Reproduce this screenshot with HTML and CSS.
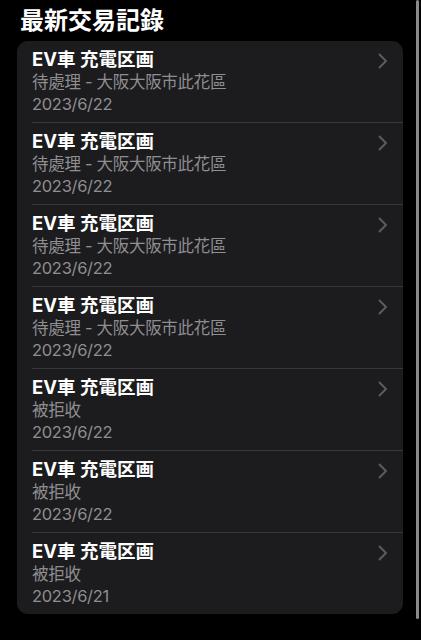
FILE: index.html
```html
<!DOCTYPE html>
<html lang="ja">
<head>
    <meta charset="UTF-8">
    <title>最新交易記錄</title>
    <link rel="stylesheet" href="styles.css">
</head>
<body>
<div class="screen">
    <h2 class="section-title">最新交易記錄</h2>

    <div class="card">
        <div class="row">
            <div class="row-text">
                <div class="row-title">EV車 充電区画</div>
                <div class="row-sub">待處理 - 大阪大阪市此花區</div>
                <div class="row-sub">2023/6/22</div>
            </div>
            <svg class="chevron" width="10" height="16" viewBox="0 0 10 16"><path d="M1.5 1.5 L8 8 L1.5 14.5"/></svg>
        </div>
        <div class="row">
            <div class="row-text">
                <div class="row-title">EV車 充電区画</div>
                <div class="row-sub">待處理 - 大阪大阪市此花區</div>
                <div class="row-sub">2023/6/22</div>
            </div>
            <svg class="chevron" width="10" height="16" viewBox="0 0 10 16"><path d="M1.5 1.5 L8 8 L1.5 14.5"/></svg>
        </div>
        <div class="row">
            <div class="row-text">
                <div class="row-title">EV車 充電区画</div>
                <div class="row-sub">待處理 - 大阪大阪市此花區</div>
                <div class="row-sub">2023/6/22</div>
            </div>
            <svg class="chevron" width="10" height="16" viewBox="0 0 10 16"><path d="M1.5 1.5 L8 8 L1.5 14.5"/></svg>
        </div>
        <div class="row">
            <div class="row-text">
                <div class="row-title">EV車 充電区画</div>
                <div class="row-sub">待處理 - 大阪大阪市此花區</div>
                <div class="row-sub">2023/6/22</div>
            </div>
            <svg class="chevron" width="10" height="16" viewBox="0 0 10 16"><path d="M1.5 1.5 L8 8 L1.5 14.5"/></svg>
        </div>
        <div class="row">
            <div class="row-text">
                <div class="row-title">EV車 充電区画</div>
                <div class="row-sub">被拒收</div>
                <div class="row-sub">2023/6/22</div>
            </div>
            <svg class="chevron" width="10" height="16" viewBox="0 0 10 16"><path d="M1.5 1.5 L8 8 L1.5 14.5"/></svg>
        </div>
        <div class="row">
            <div class="row-text">
                <div class="row-title">EV車 充電区画</div>
                <div class="row-sub">被拒收</div>
                <div class="row-sub">2023/6/22</div>
            </div>
            <svg class="chevron" width="10" height="16" viewBox="0 0 10 16"><path d="M1.5 1.5 L8 8 L1.5 14.5"/></svg>
        </div>
        <div class="row">
            <div class="row-text">
                <div class="row-title">EV車 充電区画</div>
                <div class="row-sub">被拒收</div>
                <div class="row-sub">2023/6/21</div>
            </div>
            <svg class="chevron" width="10" height="16" viewBox="0 0 10 16"><path d="M1.5 1.5 L8 8 L1.5 14.5"/></svg>
        </div>
    </div>

    <div class="scrollbar"></div>
</div>
</body>
</html>
```

FILE: styles.css
```css
body {
    margin: 0;
    background: #000;
    font-family: Inter, "Noto Sans CJK JP", sans-serif;
    color: #fff;
}

.screen {
    position: relative;
    height: 640px;
    padding: 0 18px 0 17px;
    overflow: hidden;
}

.section-title {
    margin: 0 0 5px;
    padding: 6px 0 0 3px;
    font-size: 24px;
    line-height: 30px;
    font-weight: 700;
}

.card {
    background: #1c1c1e;
    border-radius: 11px;
    overflow: hidden;
}

.row {
    display: flex;
    align-items: flex-start;
    margin-left: 15px;
    padding: 7px 15px 7px 0;
    border-bottom: 1px solid #38383a;
}

.row:last-child {
    border-bottom: none;
}

.row-text {
    flex: 1;
}

.row-title {
    font-size: 18.5px;
    line-height: 23px;
    font-weight: 700;
}

.row-sub {
    font-size: 16.5px;
    line-height: 22px;
    letter-spacing: -0.3px;
    color: #8e8e93;
}

.chevron {
    margin-top: 5px;
    fill: none;
    stroke: #5b5b60;
    stroke-width: 2;
    stroke-linecap: round;
    stroke-linejoin: round;
}

.scrollbar {
    position: absolute;
    top: 0;
    right: 2px;
    width: 3px;
    height: 619px;
    border-radius: 2px;
    background: #8a8a8e;
}
```
